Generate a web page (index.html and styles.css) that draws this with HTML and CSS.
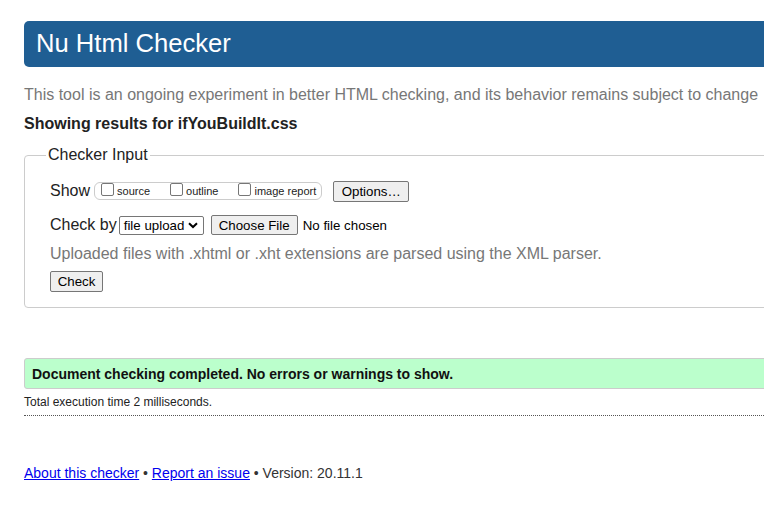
FILE: index.html
```html
<!DOCTYPE html>
<html>
<head>
<meta charset="utf-8">
<title>Nu Html Checker</title>
<link rel="stylesheet" href="styles.css">
</head>
<body>
<div class="page">
  <h1 class="title">Nu Html Checker</h1>
  <p class="intro">This tool is an ongoing experiment in better HTML checking, and its behavior remains subject to change</p>
  <p class="showing">Showing results for ifYouBuildIt.css</p>
  <fieldset class="inputs">
    <legend class="legend">Checker Input</legend>
    <div class="row">
      <span class="label">Show</span>
      <span class="showbox">
        <label class="opt"><span class="cb"></span>source</label>
        <label class="opt"><span class="cb"></span>outline</label>
        <label class="opt"><span class="cb"></span>image report</label>
      </span>
      <span class="btn options">Options…</span>
    </div>
    <div class="row row2">
      <span class="label">Check by</span>
      <span class="select">file upload<svg class="chev" width="10" height="7" viewBox="0 0 10 7"><path d="M1 1.2 L5 5 L9 1.2" fill="none" stroke="#000" stroke-width="2"/></svg></span>
      <span class="btn choose">Choose File</span>
      <span class="nofile">No file chosen</span>
    </div>
    <p class="hint">Uploaded files with .xhtml or .xht extensions are parsed using the XML parser.</p>
    <span class="btn check">Check</span>
  </fieldset>
  <div class="success">Document checking completed. No errors or warnings to show.</div>
  <p class="stats">Total execution time 2 milliseconds.</p>
  <p class="footer"><a href="#">About this checker</a> • <a href="#">Report an issue</a> • Version: 20.11.1</p>
</div>
</body>
</html>
```
FILE: styles.css
```css
html, body {
  margin: 0;
  padding: 0;
  overflow: hidden;
  background: #fff;
}
body {
  font-family: "Liberation Sans", Arial, sans-serif;
  color: #222;
}
.page {
  width: 790px;
  padding: 21px 0 0 24px;
}
.title {
  margin: 0;
  height: 46px;
  box-sizing: border-box;
  padding: 8px 0 0 12px;
  background: #1f5e93;
  color: #fff;
  font-size: 25.6px;
  font-weight: normal;
  line-height: 29px;
  border-radius: 5px;
}
.intro {
  margin: 18px 0 0 0;
  font-size: 16px;
  line-height: 19px;
  color: #777;
  white-space: nowrap;
}
.showing {
  margin: 10px 0 0 0;
  font-size: 16px;
  line-height: 19px;
  font-weight: bold;
  color: #222;
}
.inputs {
  margin: 13px 0 0 0;
  padding: 16px 24px 15px 25px;
  border: 1px solid #ccc;
  border-radius: 4px;
  min-width: 0;
}
.legend {
  padding: 0 2px;
  margin-left: -4px;
  font-size: 16px;
  color: #222;
}
.row {
  display: flex;
  align-items: center;
  height: 22px;
}
.row2 {
  margin-top: 12px;
}
.label {
  font-size: 16px;
  margin-right: 4px;
}
.showbox {
  display: inline-flex;
  align-items: center;
  height: 16px;
  border: 1px solid #ccc;
  border-radius: 6px;
  padding: 0 5px 0 6px;
  margin-right: 11px;
  font-size: 11px;
}
.opt {
  display: inline-flex;
  align-items: center;
  margin-right: 20px;
}
.opt:last-child {
  margin-right: 0;
}
.cb {
  display: inline-block;
  box-sizing: border-box;
  width: 13px;
  height: 13px;
  border: 1px solid #767676;
  border-radius: 2px;
  margin-right: 3px;
  margin-top: -3px;
}
.btn {
  display: inline-flex;
  align-items: center;
  justify-content: center;
  box-sizing: border-box;
  border: 1px solid #767676;
  border-radius: 2px;
  background: #efefef;
  font-size: 13.3px;
  color: #000;
}
.options {
  width: 76px;
  height: 21px;
}
.select {
  display: inline-flex;
  align-items: center;
  box-sizing: border-box;
  width: 85px;
  height: 19px;
  border: 1px solid #767676;
  border-radius: 2px;
  padding: 0 0 0 4px;
  font-size: 13.3px;
  color: #000;
  margin-left: -2px;
}
.chev {
  margin-left: 4px;
}
.choose {
  width: 87px;
  height: 20px;
  margin-left: 7px;
}
.nofile {
  font-size: 13.3px;
  color: #000;
  margin-left: 5px;
}
.hint {
  margin: 8px 0 0 0;
  font-size: 16px;
  line-height: 19px;
  color: #777;
}
.check {
  width: 53px;
  height: 21px;
  margin-top: 8px;
}
.success {
  margin-top: 50px;
  height: 31px;
  box-sizing: border-box;
  padding: 7px 0 0 7px;
  background: #bbffcc;
  border: 1px solid #ccc;
  border-radius: 3px;
  font-size: 14px;
  font-weight: bold;
  color: #111;
}
.stats {
  margin: 6px 0 0 0;
  padding-bottom: 6px;
  font-size: 12px;
  line-height: 14px;
  color: #222;
  border-bottom: 1px dotted #555;
}
.footer {
  margin: 49px 0 0 0;
  font-size: 14px;
  line-height: 16px;
  color: #333;
}
.footer a {
  color: #0000ee;
}
```
